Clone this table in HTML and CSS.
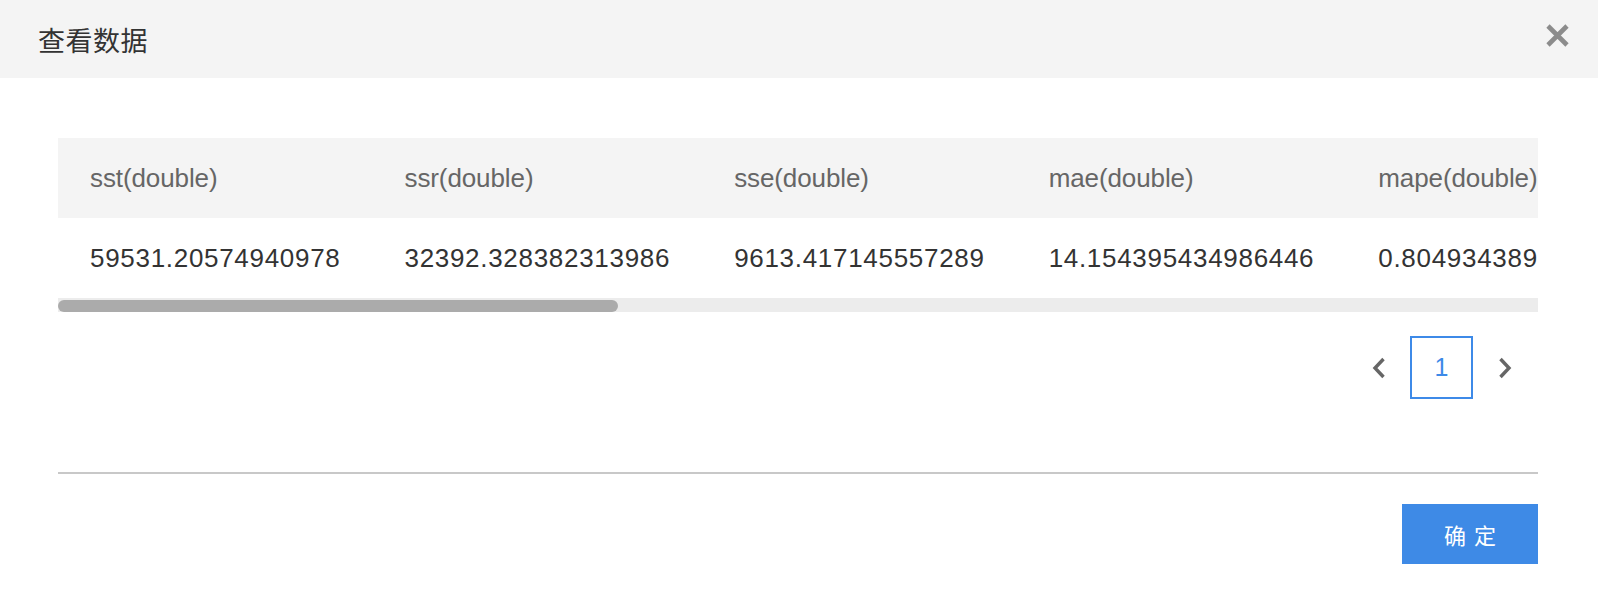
FILE: index.html
```html
<!DOCTYPE html>
<html lang="zh-CN">
<head>
<meta charset="utf-8">
<title>查看数据</title>
<link rel="stylesheet" href="styles.css">
</head>
<body>
<div class="dialog">
  <div class="dialog-header">
    <h1 class="dialog-title">查看数据</h1>
    <button class="close-btn" aria-label="关闭">
      <svg width="25" height="25" viewBox="0 0 25 25"><path d="M3 3 L22 22 M22 3 L3 22" stroke="#8c8c8c" stroke-width="4.6" fill="none"/></svg>
    </button>
  </div>
  <div class="dialog-body">
    <div class="table-wrap">
      <table class="data-table">
        <thead>
          <tr>
            <th>sst(double)</th>
            <th>ssr(double)</th>
            <th>sse(double)</th>
            <th>mae(double)</th>
            <th>mape(double)</th>
          </tr>
        </thead>
        <tbody>
          <tr>
            <td>59531.20574940978</td>
            <td>32392.328382313986</td>
            <td>9613.417145557289</td>
            <td>14.154395434986446</td>
            <td>0.8049343891427416</td>
          </tr>
        </tbody>
      </table>
    </div>
    <div class="scrollbar">
      <div class="scrollbar-thumb" style="width: 560px;"></div>
    </div>
    <div class="pager">
      <button class="pager-btn" aria-label="上一页">
        <svg width="14" height="22" viewBox="0 0 14 22"><path d="M11.5 2 L3 11 L11.5 20" stroke="#666" stroke-width="3.4" fill="none"/></svg>
      </button>
      <button class="pager-btn pager-current">1</button>
      <button class="pager-btn" aria-label="下一页">
        <svg width="14" height="22" viewBox="0 0 14 22"><path d="M2.5 2 L11 11 L2.5 20" stroke="#666" stroke-width="3.4" fill="none"/></svg>
      </button>
    </div>
    <div class="divider"></div>
    <div class="dialog-footer">
      <button class="ok-btn"><span>确</span><span>定</span></button>
    </div>
  </div>
</div>
</body>
</html>
```

FILE: styles.css
```css
html, body {
  margin: 0;
  padding: 0;
  background: #ffffff;
}

body {
  font-family: "Liberation Sans", "Noto Sans CJK SC", sans-serif;
  color: #333333;
}

.dialog {
  width: 1598px;
}

.dialog-header {
  height: 78px;
  background: #f4f4f4;
  display: flex;
  align-items: center;
  justify-content: space-between;
  padding: 0 28px 0 38px;
  box-sizing: border-box;
}

.dialog-title {
  margin: 0;
  font-family: "Noto Sans CJK SC", sans-serif;
  font-size: 27px;
  font-weight: 400;
  color: #333333;
  line-height: 1;
  letter-spacing: 0.5px;
}

.close-btn {
  border: 0;
  background: transparent;
  padding: 0;
  width: 25px;
  height: 25px;
  display: flex;
  margin-top: -8px;
  cursor: pointer;
}

.dialog-body {
  padding: 60px 60px 0 58px;
}

.table-wrap {
  overflow: hidden;
}

.data-table {
  border-collapse: collapse;
  white-space: nowrap;
}

.data-table th,
.data-table td {
  height: 80px;
  padding: 0 32px;
  text-align: left;
  font-size: 26px;
  font-weight: 400;
  box-sizing: border-box;
}

.data-table th {
  background: #f4f4f4;
  color: #666666;
  letter-spacing: -0.1px;
}

.data-table td {
  color: #333333;
  letter-spacing: 0.7px;
}

.scrollbar {
  height: 14px;
  background: #ececec;
  display: flex;
  align-items: flex-end;
}

.scrollbar-thumb {
  height: 12px;
  background: #ababab;
  border-radius: 6px;
}

.pager {
  display: flex;
  justify-content: flex-end;
  margin-top: 24px;
  padding-right: 2px;
}

.pager-btn {
  width: 63px;
  height: 63px;
  border: 0;
  background: transparent;
  padding: 0;
  display: flex;
  align-items: center;
  justify-content: center;
  font-family: "Liberation Sans", sans-serif;
  font-size: 25px;
  color: #3d8ae8;
  box-sizing: border-box;
}

.pager-current {
  border: 2px solid #3d8ae8;
}

.divider {
  margin-top: 73px;
  border-top: 2px solid #c8c8c8;
}

.dialog-footer {
  display: flex;
  justify-content: flex-end;
  padding-top: 30px;
}

.ok-btn {
  width: 136px;
  height: 60px;
  border: 0;
  background: #3e8ae6;
  color: #ffffff;
  font-family: "Noto Sans CJK SC", sans-serif;
  font-size: 22px;
  display: flex;
  align-items: center;
  justify-content: center;
  gap: 8px;
  box-shadow: 0 4px 0 #f0f0f0;
  padding: 0;
}
```
